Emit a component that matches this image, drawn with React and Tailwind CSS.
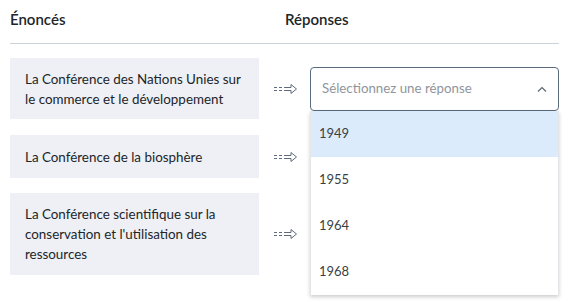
const rows = [
  { text: ["La Conférence des Nations Unies sur", "le commerce et le développement"], h: "h-[61px]", mt: "mt-[14px]" },
  { text: ["La Conférence de la biosphère"], h: "h-[43px]", mt: "mt-[16px]" },
  { text: ["La Conférence scientifique sur la", "conservation et l'utilisation des", "ressources"], h: "h-[82px]", mt: "mt-[15px]" },
];

const options = ["1949", "1955", "1964", "1968"];

function DashArrow() {
  return (
    <svg width="24" height="12" viewBox="0 0 24 12" fill="none" stroke="#5f6b7a" strokeWidth="1">
      <path d="M0 4.5h3M5 4.5h3M10 4.5h7" />
      <path d="M0 7.5h3M5 7.5h3M10 7.5h7" />
      <path d="M17 4.5V1.5l5.5 4.5-5.5 4.5V7.5" strokeLinejoin="round" />
    </svg>
  );
}

export default function App() {
  return (
    <div
      className="w-[569px] h-[306px] bg-white overflow-hidden relative text-[#212529]"
      style={{ fontFamily: "Lato, 'Noto Sans', sans-serif" }}
    >
      <div className="flex pt-[9px] px-[10px] text-[15px] font-semibold leading-[20px]">
        <div className="w-[275px]">Énoncés</div>
        <div>Réponses</div>
      </div>
      <div className="mx-[10px] mt-[14px] border-t border-[#ced3d9]" />

      <div className="px-[10px]">
        {rows.map((r, i) => (
          <div key={i} className={`flex items-center ${r.mt}`}>
            <div className={`w-[249px] ${r.h} bg-[#eef0f5] flex items-center px-[15px] text-[13.4px] leading-[20px]`}>
              <div>
                {r.text.map((t, j) => (
                  <div key={j} className="whitespace-nowrap">{t}</div>
                ))}
              </div>
            </div>
            <div className="ml-[15px] flex">
              <DashArrow />
            </div>
          </div>
        ))}
      </div>

      <div className="absolute left-[310px] top-[67px] w-[249px]">
        <div className="h-[44px] border border-[#5b6b7c] rounded-[4px] flex items-center justify-between pl-[11px] pr-[11px] text-[13.3px] text-[#8f959c]">
          <span>Sélectionnez une réponse</span>
          <svg width="10" height="6" viewBox="0 0 10 6" fill="none" stroke="#5b6673" strokeWidth="1.2">
            <path d="M1 5.5 5 1.5l4 4" />
          </svg>
        </div>
        <div className="bg-white shadow-[0_2px_4px_rgba(0,0,0,0.2)] border-l border-r border-[#e3e5e8]">
          {options.map((o, i) => (
            <div
              key={o}
              className={`h-[46px] flex items-center px-[8px] text-[13px] text-[#3b3f45] ${i === 0 ? "bg-[#dcebfb]" : ""}`}
            >
              {o}
            </div>
          ))}
        </div>
      </div>
    </div>
  );
}
